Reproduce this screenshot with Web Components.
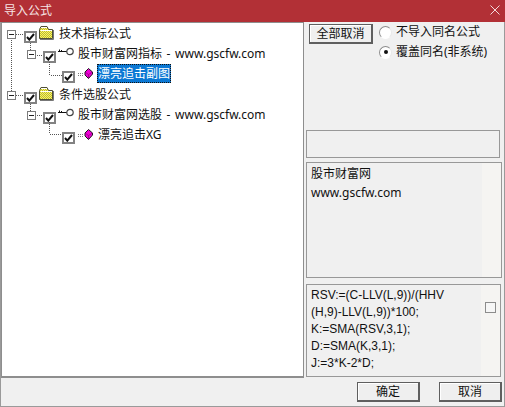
<!DOCTYPE html>
<html lang="zh"><head><meta charset="utf-8"><title>导入公式</title>
<style>html,body{margin:0;padding:0;background:#f0f0f0}</style></head><body>
<x-dialog heading="导入公式">
  <x-tree slot="tree">
    <x-row level="0" kind="folder">技术指标公式</x-row>
    <x-row level="1" kind="key">股市财富网指标 - www.gscfw.com</x-row>
    <x-row level="2" kind="gem" selected>漂亮追击副图</x-row>
    <x-row level="0" kind="folder">条件选股公式</x-row>
    <x-row level="1" kind="key">股市财富网选股 - www.gscfw.com</x-row>
    <x-row level="2" kind="gem">漂亮追击XG</x-row>
  </x-tree>
  <div slot="options" style="display:flex;gap:6px">
    <x-btn style="width:64px;height:20px;margin-top:2px">全部取消</x-btn>
    <div style="display:flex;flex-direction:column">
      <x-radio>不导入同名公式</x-radio>
      <x-radio checked>覆盖同名(非系统)</x-radio>
    </div>
  </div>
  <x-box slot="empty" style="width:194px;height:28px"></x-box>
  <x-box slot="info" scroll style="width:196px;height:116px;--lh:19px;--pt:1px"><div>股市财富网</div><div>www.gscfw.com</div></x-box>
  <x-box slot="code" scroll check style="width:195px;height:93px;--lh:17px;--pt:2px;--ff:'Liberation Sans'"><div>RSV:=(C-LLV(L,9))/(HHV</div><div>(H,9)-LLV(L,9))*100;</div><div>K:=SMA(RSV,3,1);</div><div>D:=SMA(K,3,1);</div><div>J:=3*K-2*D;</div></x-box>
  <x-btn slot="actions" style="width:63px;height:20px">确定</x-btn>
  <x-btn slot="actions" style="width:63px;height:20px">取消</x-btn>
</x-dialog>
<script>
const FONT='"Noto Sans","Noto Sans CJK SC","Liberation Sans",sans-serif';
function def(name,render){
  customElements.define(name,class extends HTMLElement{
    constructor(){super();this.attachShadow({mode:'open'});}
    connectedCallback(){this.shadowRoot.innerHTML=render(this);}
  });
}
def('x-dialog',el=>`<style>
:host{display:grid;grid-template-rows:22px 356px 1fr;width:505px;height:407px;box-sizing:border-box;background:#f0f0f0;color:#111;font:12px/20px ${FONT};border-left:1px solid #9a9a9a;border-bottom:1px solid #9a9a9a;border-right:1px solid #9a9a9a}
.bar{background:#b23036;color:#f6e4e4;display:flex;align-items:center;justify-content:space-between;padding:0 5px 1px 4px;margin:0 -1px;font-size:12px}
.x{width:10px;height:10px;display:block;margin-top:-2px}
.main{display:flex;min-height:0}
.tree{width:303px;box-sizing:border-box;flex:none;background:#fff;border:1px solid #8e8e8e;border-width:1px 1px 2px 1px;margin-right:2px;display:flex}
.right{display:flex;flex-direction:column;flex:1;min-width:0}
.opts{height:108px;padding-left:3px}
.empty{height:32px}
.info{height:122px}
.foot{display:flex;justify-content:flex-end;gap:19px;padding:4px 2px 0 0}
</style>
<div class="bar"><span>${el.getAttribute('heading')}</span><svg class="x" viewBox="0 0 10 10"><path d="M.5.5l9 9M9.5.5l-9 9" stroke="#f3dada" stroke-width="1" fill="none"/></svg></div>
<div class="main"><div class="tree"><slot name="tree"></slot></div>
<div class="right"><div class="opts"><slot name="options"></slot></div><div class="empty"><slot name="empty"></slot></div><div class="info"><slot name="info"></slot></div><slot name="code"></slot></div></div>
<div class="foot"><slot name="actions"></slot></div>`);
def('x-tree',()=>`<style>
:host{display:block;position:relative;flex:1}
svg{position:absolute;left:0;top:0;width:300px;height:150px;pointer-events:none}
</style>
<svg viewBox="0 0 300 150" fill="none" stroke="#555" stroke-dasharray="1 1" shape-rendering="crispEdges">
<path d="M9.5 15V69"/>
<path d="M14 11H22M14 72H22"/>
<path d="M28.5 20V28M28.5 81V88"/>
<path d="M33 32H41M33 92H41"/>
<path d="M47.5 39V52H60M47.5 99V111H60"/>
</svg><slot></slot>`);
def('x-row',el=>{
 const lv=+el.getAttribute('level'),k=el.getAttribute('kind'),sel=el.hasAttribute('selected');
 const icon={folder:`<svg width="15" height="14" viewBox="0 0 15 14" style="margin:-1px 0 0 2px"><defs><pattern id="d" width="2" height="2" patternUnits="userSpaceOnUse"><rect width="2" height="2" fill="#ffff55"/><rect width="1" height="1" fill="#b8b040"/><rect x="1" y="1" width="1" height="1" fill="#b8b040"/></pattern></defs><path d="M.5 3.500 2 .5H8L9.500 3.500H13.500V12.500H.5Z" fill="url(#d)" stroke="#4f4f35"/><path d="M2 1.500H8M1.500 4.500H13" stroke="#fff"/><path d="M14.500 4v9.500H1" stroke="#777" fill="none"/></svg>`,
 key:`<svg width="16" height="9" viewBox="0 0 16 9" style="margin:-3px 0 0 2px"><path d="M0 4.500H9M1.500 4.500V2.500M3.500 4.500V3" stroke="#111" fill="none"/><circle cx="12" cy="4.500" r="3.200" fill="#fff" stroke="#444" stroke-width="1.200"/></svg>`,
 gem:`<svg width="16" height="12" viewBox="0 0 16 12" style="margin:1px 0 0 2px"><path d="M1 5.500H7M1 7.500H7" stroke="#777" stroke-dasharray="1 1"/><path d="M11.500.5 15.500 4 15.500 6 11.500 10.500 8 7 8 4Z" fill="#f000d8" stroke="#1a1a1a"/><path d="M8 4 11.500 6.500 15.500 4M11.500 6.500V10.500" stroke="#8c0078" stroke-width=".7" fill="none"/></svg>`}[k];
 const exp=lv<2?`<span class="exp"></span><span class="gap"></span>`:'';
 return `<style>
:host{display:block;height:20.3px}
.r{display:flex;align-items:center;height:100%;padding-left:${[5,25,60][lv]}px;white-space:nowrap}
.exp{width:9px;height:9px;box-sizing:border-box;border:1px solid #7c7c7c;background:#fff;position:relative;margin-top:2px;flex:none}
.exp::after{content:"";position:absolute;left:1px;right:1px;top:3px;height:1px;background:#222}
.gap{width:${lv==0?8:7}px}
.ck{margin-top:7px;width:13px;height:12px;box-sizing:border-box;border:2px solid #828282;background:#fff;flex:none;display:flex;align-items:center;justify-content:center}
.lab{margin-left:${k=='folder'?4:k=='key'?3:4}px;line-height:19px;padding:0 1px;word-spacing:1.5px;${sel?'background:#0b78d4;color:#fff;outline:1px dotted #111;outline-offset:-1px;':''}}
</style><div class="r">${exp}<span class="ck"><svg width="9" height="8" viewBox="0 0 9 8"><path d="M1 4l2.300 2.600L8 1" stroke="#111" stroke-width="2" fill="none"/></svg></span>${icon}<span class="lab"><slot></slot></span></div>`;
});
def('x-btn',()=>`<style>
:host{display:inline-flex;align-items:center;justify-content:center;box-sizing:border-box;border:1px solid #5f5f5f;border-right-width:2px;border-bottom-width:2px;background:#efefef;box-shadow:inset 1px 1px 0 #fff;font:12px/16px ${FONT};color:#111;flex:none}
</style><slot></slot>`);
def('x-radio',el=>`<style>
:host{display:flex;align-items:center;height:20px;font:12px/20px ${FONT};color:#111;white-space:nowrap}
.o{width:11px;height:11px;border-radius:50%;background:#fff;border:1px solid;border-color:#8d8d8d #e8e8e8 #fff #8d8d8d;margin:0 4px 0 0;display:flex;align-items:center;justify-content:center;flex:none;box-sizing:content-box}
.o i{width:4px;height:4px;border-radius:50%;background:#111;display:${el.hasAttribute('checked')?'block':'none'}}
</style><span class="o"><i></i></span><slot></slot>`);
def('x-box',el=>`<style>
:host{display:flex;box-sizing:border-box;border:1px solid #989898;background:#f0f0f0;font:12px/var(--lh,17px) var(--ff,"Noto Sans"),"Noto Sans CJK SC",sans-serif;color:#111;position:relative}
.t{flex:1;padding:var(--pt,2px) 0 0 4px;white-space:nowrap;min-width:0}
.s{width:19px;background:#f5f4f2;flex:none;display:flex;justify-content:center;align-items:flex-start}
.c{width:9px;height:9px;border:1px solid #8c8c8c;background:#f6f6f6;margin-top:17px}
</style><div class="t"><slot></slot></div>${el.hasAttribute('scroll')?`<div class="s">${el.hasAttribute('check')?'<span class="c"></span>':''}</div>`:''}`);
</script>
</body></html>
